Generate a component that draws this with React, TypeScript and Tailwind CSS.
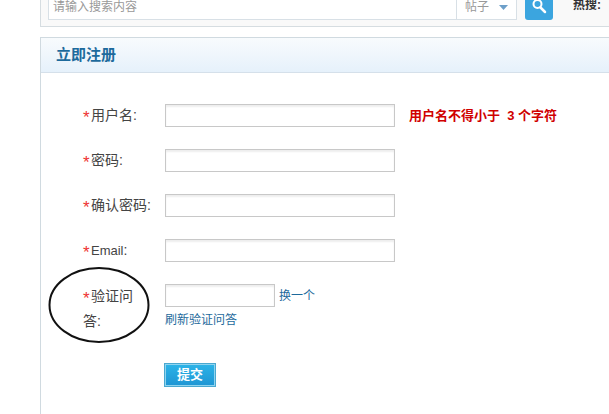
import React from "react";

const cjk = "font-['Liberation_Sans','Noto_Sans_CJK_SC',sans-serif]";

function Star() {
    return <span className="relative top-[3px] inline-block w-2 text-[17px] leading-[14px] text-[#e33]">*</span>;
}

function Row({ label, hint }: { label: React.ReactNode; hint?: string }) {
    return (
        <div className="flex h-[23px] items-center">
            <label className="w-[82px] shrink-0 pb-px text-sm text-[#444]">
                <Star />{label}:
            </label>
            <input className="h-[23px] w-[230px] border border-[#c8c8c8] bg-white shadow-[inset_0_2px_2px_#eee]" />
            {hint && <span className="ml-[14px] text-[13px] font-bold whitespace-pre text-[#d00000]">{hint}</span>}
        </div>
    );
}

export default function App() {
    return (
        <div className={"relative h-[414px] w-[609px] overflow-hidden bg-white " + cjk}>
            {/* search bar, cut off by the top of the page */}
            <div className="ml-10 flex h-[27px] w-[640px] border-x border-b border-[#d6dde1] bg-[#f9f9f9] pl-[7px]">
                <div className="flex h-[20px] w-[469px] border-x border-b border-[#d8e0e6] bg-white">
                    <span className="ml-[4px] flex-1 text-xs leading-[15px] text-[#999]">请输入搜索内容</span>
                    <div className="flex w-[60px] border-l border-[#d8e0e6] pl-[8px] text-xs leading-[15px] text-[#999]">
                        帖子
                        <svg width="9" height="5" viewBox="0 0 9 5" className="mt-[5px] ml-[10px]">
                            <path d="M0 0h9L4.500 5z" fill="#6d9fc9" />
                        </svg>
                    </div>
                </div>
                <div className="ml-2 flex h-[20px] w-[28px] items-start justify-center rounded-b-[3px] bg-[#3ba5df]">
                    <svg width="16" height="14" viewBox="0 0 16 14" fill="none" stroke="white">
                        <circle cx="6.500" cy="4" r="4" strokeWidth="2" />
                        <path d="M9.500 7.500l4.500 4.500" strokeWidth="2.500" strokeLinecap="round" />
                    </svg>
                </div>
                <span className="ml-5 text-xs leading-[11px] font-bold text-[#333]">热搜:</span>
            </div>

            {/* register panel */}
            <div className="mt-[10px] ml-10 h-[400px] w-[640px] border-t border-l border-[#d0dae0]">
                <div className="flex h-[35px] items-center border-b border-[#d5e0ea] bg-gradient-to-b from-[#f8fbfd] to-[#e6f1fb] pl-[15px] text-[15px] font-bold text-[#1d6a9c]">
                    立即注册
                </div>
                <div className="flex flex-col gap-[22px] pt-[31px] pl-[42px]">
                    <Row label="用户名" hint="用户名不得小于  3 个字符" />
                    <Row label="密码" />
                    <Row label="确认密码" />
                    <Row label={<span className="text-[13px]">Email</span>} />
                    <div className="flex">
                        <label className="w-[82px] shrink-0 pr-5 text-sm leading-[25px] text-[#444]">
                            <Star />验证问答:
                        </label>
                        <div>
                            <div className="flex items-center">
                                <input className="h-[23px] w-[110px] border border-[#c8c8c8] bg-white shadow-[inset_0_2px_2px_#eee]" />
                                <a className="ml-[4px] text-xs text-[#1d6a9c]">换一个</a>
                            </div>
                            <a className="mt-[5px] block text-xs text-[#1d6a9c]">刷新验证问答</a>
                            <button className="mt-[35px] -ml-px block h-[24px] w-[52px] border border-[#4aa8d0] bg-gradient-to-b from-[#2cb4e8] to-[#1f95d3] text-[13px] font-bold text-white outline outline-1 -outline-offset-2 outline-[#8fd4ef]">
                                提交
                            </button>
                        </div>
                    </div>
                </div>
            </div>

            {/* hand drawn ring around the label */}
            <svg width="104" height="78" viewBox="0 0 104 78" fill="none" className="absolute top-[266px] left-[47px]">
                <ellipse cx="52" cy="39" rx="49.500" ry="37" stroke="#111" strokeWidth="2" />
            </svg>
        </div>
    );
}
